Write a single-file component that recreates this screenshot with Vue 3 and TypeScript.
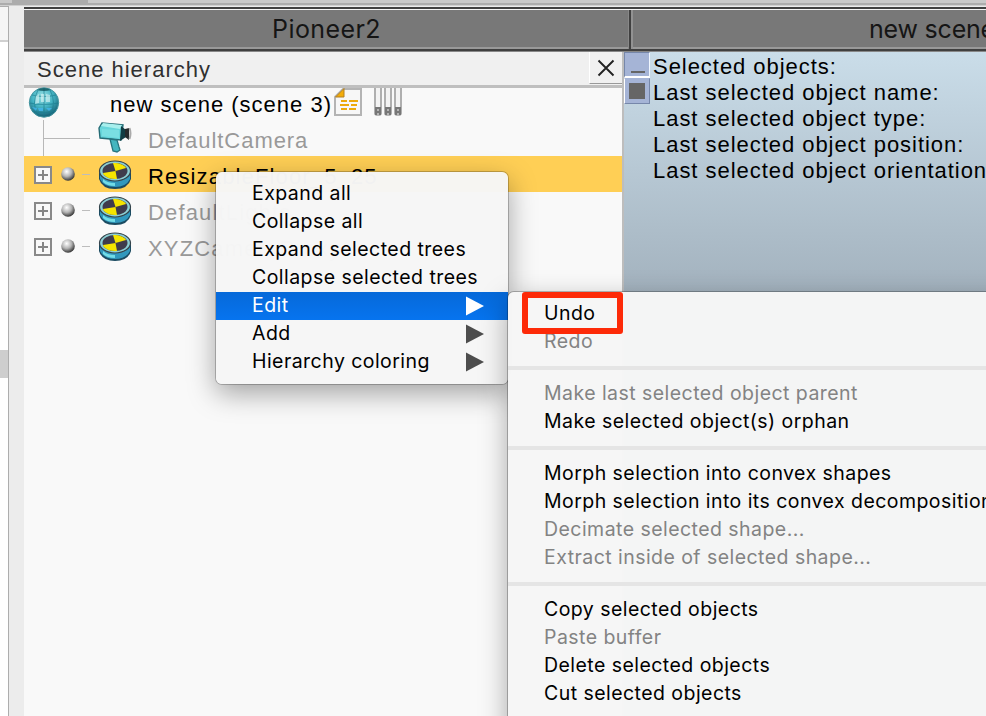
<script setup lang="ts">
interface TreeNode { name: string; selected: boolean }
interface MenuItem { label: string; submenu?: boolean; active?: boolean; disabled?: boolean; marked?: boolean }

const nodes: TreeNode[] = [
  { name: 'ResizableFloor_5_25', selected: true },
  { name: 'DefaultLights', selected: false },
  { name: 'XYZCameraProxy', selected: false },
]
const info: string[] = [
  'Selected objects:',
  'Last selected object name:',
  'Last selected object type:',
  'Last selected object position:',
  'Last selected object orientation:',
]
const contextMenu: MenuItem[] = [
  { label: 'Expand all' },
  { label: 'Collapse all' },
  { label: 'Expand selected trees' },
  { label: 'Collapse selected trees' },
  { label: 'Edit', submenu: true, active: true },
  { label: 'Add', submenu: true },
  { label: 'Hierarchy coloring', submenu: true },
]
const editGroups: MenuItem[][] = [
  [{ label: 'Undo', marked: true }, { label: 'Redo', disabled: true }],
  [{ label: 'Make last selected object parent', disabled: true }, { label: 'Make selected object(s) orphan' }],
  [
    { label: 'Morph selection into convex shapes' },
    { label: 'Morph selection into its convex decomposition' },
    { label: 'Decimate selected shape...', disabled: true },
    { label: 'Extract inside of selected shape...', disabled: true },
  ],
  [
    { label: 'Copy selected objects' },
    { label: 'Paste buffer', disabled: true },
    { label: 'Delete selected objects' },
    { label: 'Cut selected objects' },
  ],
]
</script>

<template>
  <div class="window">
    <div class="topbar"><span class="topbar-tab"></span></div>
    <div class="body">
      <aside class="sidebar"><div class="sidebar-head"></div><div class="sidebar-thumb"></div></aside>
      <div class="gutter"></div>
      <main class="main">
        <header class="tabs">
          <div class="tab first">Pioneer2</div>
          <div class="tab second">new scene</div>
        </header>
        <div class="content">
          <section class="tree">
            <div class="tree-title">
              <span>Scene hierarchy</span>
              <button class="close" aria-label="Close">
                <svg width="18" height="18" viewBox="0 0 18 18"><path d="M1.5 1.5 16.5 16.5M16.5 1.5 1.5 16.5" stroke="#222" stroke-width="1.9" /></svg>
              </button>
            </div>
            <div class="row root">
              <svg class="globe" width="32" height="32" viewBox="0 0 32 32">
                <defs>
                  <radialGradient id="globe" cx=".45" cy=".3" r=".72">
                    <stop offset="0" stop-color="#9fe3e6" /><stop offset=".5" stop-color="#43b3c3" /><stop offset="1" stop-color="#135a70" />
                  </radialGradient>
                </defs>
                <circle cx="16" cy="15.5" r="14.7" fill="url(#globe)" stroke="#4a98a2" stroke-width="1" />
                <path d="M4 8q12 3 24 0M1.5 16q14 3 29 0M4 24q12 3 24 0M16 2v28M10 3q-7 13 0 26M22 3q7 13 0 26" fill="none" stroke="#1b7c8e" stroke-width="1.1" opacity=".6" />
                <path d="M9 3q7-4 14 0-7 2-14 0" fill="#12555d" opacity=".8" />
                <path d="M8 9l3-2v9l-4 1zM13 7h3v8h-3zM18 7l4 1v7h-4z" fill="#d4f3f2" opacity=".65" />
                <path d="M4 20l5 1-1 3zM10 21h5v3h-4zM18 21h6l-3 3z" fill="#42b7ed" opacity=".8" />
              </svg>
              <span class="root-name">new scene (scene 3)</span>
              <svg class="script" width="28" height="28" viewBox="0 0 28 28">
                <path d="M9 1H27V27H1V9z" fill="#f7f7f7" stroke="#b4b4b4" stroke-width="2" />
                <path d="M1.5 9 10 .5v8.500z" fill="#f3ac08" stroke="#b38023" stroke-width="1" />
                <path d="M7 13h6m2 0h9M6 17h9m2 0h6M7 21h6m2 0h7" stroke="#edaa0b" stroke-width="2" />
              </svg>
              <svg class="tubes" width="28" height="29" viewBox="0 0 28 29">
                <g v-for="x in [0, 10, 20]" :key="x" :transform="`translate(${x} 0)`">
                  <path d="M1 0V25.500q0 1.500 3 1.500t3-1.500V0" fill="#f3f3f3" stroke="#a3a3a3" stroke-width="1.7" />
                  <path d="M1 19h6v8H1z" fill="#777" /><path d="M3 21h2v2H3zM3 25h2v2H3z" fill="#b5b5b5" />
                </g>
              </svg>
            </div>
            <div class="row camera">
              <svg class="branch" width="70" height="36" viewBox="0 0 70 36"><path d="M23.500 0v36M24 18.500h46" stroke="#b8b8b8" fill="none" /></svg>
              <svg class="camera-icon" width="34" height="32" viewBox="0 0 34 32">
                <path d="M1 7 4 2 25 4 23 19 2 17z" fill="#67d6db" stroke="#246b75" stroke-width="1.4" />
                <path d="M3 5 5 2 24 4 22 8z" fill="#a8efed" /><path d="M4 8 21 9v8L4 15z" fill="#7adfe2" />
                <path d="M23 5 28 9v7l-6 4z" fill="#123c43" /><path d="M27 8l4-1v12l-4-3z" fill="#262a2c" /><path d="M31.500 7q2 5 0 11" fill="none" stroke="#aaa" stroke-width="2" />
                <path d="M12 18l7 1 2 7 1 3-3 2-4-1z" fill="#44b6bf" stroke="#27747e" stroke-width="1.3" />
              </svg>
              <span class="label">DefaultCamera</span>
            </div>
            <div v-for="node in nodes" :key="node.name" class="row node" :class="{ selected: node.selected }">
              <svg class="controls" width="58" height="36" viewBox="0 0 58 36">
                <defs><radialGradient id="ball" cx=".4" cy=".32" r=".72"><stop offset="0" stop-color="#fff" /><stop offset=".5" stop-color="#b4b4b4" /><stop offset="1" stop-color="#282828" /></radialGradient></defs>
                <rect x="1" y="11" width="16" height="16" fill="#f8f8f8" stroke="#898989" stroke-width="2" />
                <path d="M4 19h10M9 14v10" stroke="#858585" stroke-width="2" />
                <circle cx="34" cy="18" r="6.8" fill="url(#ball)" />
                <path d="M48 18.500h8" stroke="#bdbdbd" />
              </svg>
              <svg class="shape-icon" width="34" height="30" viewBox="0 0 34 30">
                <path d="M1 10v9q3 10 16 10t16-10v-9z" fill="#1b4b61" />
                <path d="M2 13v6q4 8 15 8t15-8v-6q-5 7-15 7T2 13" fill="#3198bd" />
                <path d="M5 19q4 4 12 4v3q-8 0-12-4z" fill="#72dce6" />
                <ellipse cx="17" cy="11" rx="15.5" ry="10" fill="#8ccfd4" stroke="#35434b" stroke-width="1.2" />
                <ellipse cx="17" cy="11" rx="12.5" ry="8" fill="#3f3c4c" />
                <path d="M17.500 11 15 3.100q7-.8 12 3.400.8.700 1 1.500zM17.500 11 19 19q-8 .5-12.500-3.500-1.500-1.500-1.500-2.500z" fill="#f5e500" />
              </svg>
              <span class="label">{{ node.name }}</span>
            </div>
          </section>
          <section class="view">
            <div class="view-buttons"><i class="minimize"></i><i class="maximize"></i></div>
            <div class="info"><p v-for="line in info" :key="line">{{ line }}</p></div>
          </section>
        </div>
      </main>
    </div>

    <nav class="menu context">
      <div v-for="item in contextMenu" :key="item.label" class="item" :class="{ active: item.active }">
        <span>{{ item.label }}</span>
        <svg v-if="item.submenu" class="arrow" width="18" height="20" viewBox="0 0 18 20"><path d="M0 .5 18 10 0 19.5z" fill="currentColor" /></svg>
      </div>
    </nav>
    <nav class="menu edit">
      <div v-for="(group, i) in editGroups" :key="i" class="group">
        <div v-for="item in group" :key="item.label" class="item" :class="{ disabled: item.disabled, marked: item.marked }"><span>{{ item.label }}</span></div>
      </div>
    </nav>
  </div>
</template>

<style>
html, body { margin: 0; overflow: hidden; }
</style>

<style scoped>
*, *::before, *::after { box-sizing: border-box; }
.window { position: relative; display: flex; flex-direction: column; width: 986px; height: 716px; overflow: hidden; background: #ececec; font-family: "Liberation Sans", sans-serif; color: #000; }
.topbar { flex: none; height: 6px; padding-left: 12px; background: linear-gradient(#c9c9c9 0 3px, #acacac 3px 5px, #d0d0d0 5px); }
.topbar-tab { display: block; width: 76px; height: 4px; background: #acacac; }
.body { flex: 1; min-height: 0; display: flex; }
.sidebar { width: 9px; border-right: 1px solid #adadad; border-top: 1px solid #adadad; background: #fff; }
.sidebar-head { height: 35px; background: #f5f5f5; border-bottom: 2px solid #d0d0d0; }
.sidebar-thumb { height: 28px; margin-top: 308px; background: #cecece; }
.gutter { width: 15px; background: #ececec; }
.main { flex: 1; min-width: 0; display: flex; flex-direction: column; }
.tabs { flex: none; height: 46px; padding-top: 4px; display: flex; background: linear-gradient(#ececec 0 1px, #404040 1px 3px, #f4f4f4 3px 4px, #787878 4px 41px, #999 41px 43px, #404040 43px 45px, #888 45px); }
.tab { height: 39px; line-height: 38px; font-family: Inter, sans-serif; font-size: 25px; letter-spacing: .4px; color: #151515; white-space: nowrap; }
.first { width: 607px; text-align: center; border-right: 2px solid #404040; box-shadow: inset -1px 0 #888; }
.second { flex: 1; padding-left: 238px; letter-spacing: -.2px; box-shadow: inset 2px 0 #929292; overflow: hidden; }
.content { flex: 1; min-height: 0; display: flex; }
.tree { width: 600px; border-right: 2px solid #bdbdbd; background: #f9f9f9; font-size: 22px; letter-spacing: 1px; }
.tree-title { height: 36px; display: flex; justify-content: space-between; padding-left: 13px; background: #f0f0f0; border-bottom: 3px solid #bfbfbf; line-height: 35px; color: #303030; }
.close { display: flex; align-items: center; justify-content: center; width: 33px; height: 32px; padding: 0; border: 0; border-left: 1px solid #fff; border-bottom: 1px solid #999; background: #f0f0f0; }
.row { height: 36px; display: flex; align-items: flex-start; white-space: nowrap; color: #999; }
.root { height: 32px; padding-left: 4px; color: #000; }
.root-name { width: 224px; padding-left: 50px; margin-top: 4px; line-height: 26px; }
.globe { margin-top: -1px; flex: none; }
.script { margin: 0 12px 0 50px; flex: none; }
.tubes { flex: none; }
.branch { flex: none; margin-left: -4px; }
.camera-icon { margin: 1px 0 0 8px; }
.camera .label { margin-left: 16px; line-height: 42px; letter-spacing: .95px; }
.node { padding-left: 10px; }
.node .label { line-height: 42px; letter-spacing: 1.15px; }
.shape-icon { margin: 4px 16px 0 6px; }
.row.selected { background: #ffcf55; color: #000; }
.view { flex: 1; min-width: 0; display: flex; background: linear-gradient(#cadde9, #a3b2be 240px); }
.view-buttons { width: 26px; display: flex; flex-direction: column; }
.view-buttons i { display: block; height: 26px; border: 1px solid #7687aa; border-right-color: #f1f7ff; background: #a5b4d6; }
.view-buttons .minimize { padding: 18px 4px 0 6px; border-bottom: 2px solid #fff; }
.minimize::after { content: ""; display: block; height: 2px; background: #666; }
.view-buttons .maximize { padding: 4px; border-right-color: #7687aa; border-top-color: #a5b4d6; border-left-color: #fff; }
.maximize::after { content: ""; display: block; width: 16px; height: 16px; background: #666; }
.info { padding: 2px 0 0 3px; font-size: 22px; letter-spacing: .96px; white-space: nowrap; }
.info p { margin: 0; height: 26px; line-height: 26px; }
.menu { position: absolute; background: rgba(246, 246, 246, .98); font-family: Inter, sans-serif; font-size: 19.5px; letter-spacing: .45px; }
.context { left: 216px; top: 172px; width: 292px; height: 212px; padding-top: 8px; border-radius: 6px; box-shadow: 0 0 0 1px rgba(0, 0, 0, .22), 0 9px 28px rgba(0, 0, 0, .36); }
.context .item span { margin-top: -3px; }
.edit { left: 508px; top: 292px; width: 530px; height: 470px; padding-top: 7px; border-radius: 6px; box-shadow: 0 0 0 1px rgba(0, 0, 0, .25), 0 9px 28px rgba(0, 0, 0, .34); }
.item { position: relative; height: 28px; padding: 0 24px 0 36px; display: flex; align-items: center; justify-content: space-between; line-height: 28px; white-space: nowrap; }
.item span { margin-top: -1px; }
.disabled { color: #838383; }
.arrow { color: #4d4d4d; }
.active { color: #fff; background: linear-gradient(#0669d9, #0674ef); }
.active .arrow { color: #fff; }
.group + .group { margin-top: 11px; padding-top: 9px; border-top: 4px solid #e5e5e5; }
.marked::after { content: ""; position: absolute; z-index: 2; left: 14px; top: -7px; width: 101px; height: 42px; border: 6px solid #fd2a08; border-radius: 3px; }
</style>
